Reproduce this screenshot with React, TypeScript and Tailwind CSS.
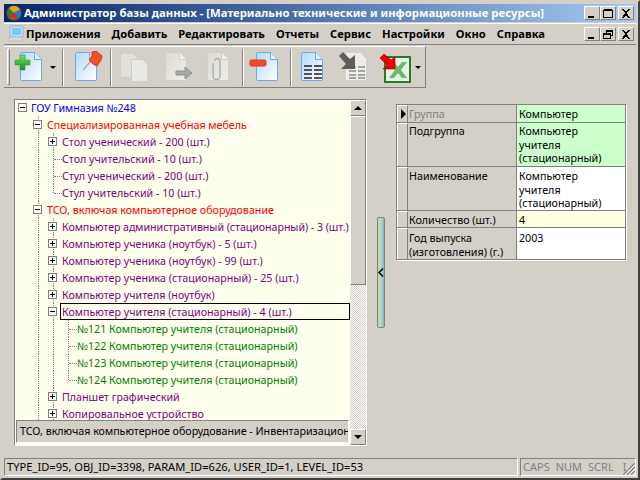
import type { ReactNode } from "react"

const raised = "border-t border-l border-t-white border-l-white border-r border-b border-r-[#808080] border-b-[#808080]"
const sunken = "border border-t-[#808080] border-l-[#808080] border-r-white border-b-white"

type TreeRow = {
  text: string
  color: string
  level: number
  box?: "plus" | "minus"
  guides: number[]
  last?: boolean
  selected?: boolean
  tight?: boolean
}

const PURPLE = "text-[#800080]"
const RED = "text-[#ff0000]"
const GREEN = "text-[#008000]"

const rows: TreeRow[] = [
  { text: "ГОУ Гимназия №248", color: "text-[#0000ff]", level: 0, box: "minus", guides: [] },
  { text: "Специализированная учебная мебель", color: RED, level: 1, box: "minus", guides: [1] },
  { text: "Стол ученический - 200 (шт.)", color: PURPLE, level: 2, box: "plus", guides: [1, 2] },
  { text: "Стол учительский - 10 (шт.)", color: PURPLE, level: 2, guides: [1, 2] },
  { text: "Стул ученический - 200 (шт.)", color: PURPLE, level: 2, guides: [1, 2] },
  { text: "Стул учительский - 10 (шт.)", color: PURPLE, level: 2, guides: [1, 2], last: true },
  { text: "ТСО, включая компьютерное оборудование", color: RED, level: 1, box: "minus", guides: [1] },
  { text: "Компьютер административный (стационарный) - 3 (шт.)", color: PURPLE, level: 2, box: "plus", guides: [1, 2], tight: true },
  { text: "Компьютер ученика (ноутбук) - 5 (шт.)", color: PURPLE, level: 2, box: "plus", guides: [1, 2] },
  { text: "Компьютер ученика (ноутбук) - 99 (шт.)", color: PURPLE, level: 2, box: "plus", guides: [1, 2] },
  { text: "Компьютер ученика (стационарный) - 25 (шт.)", color: PURPLE, level: 2, box: "plus", guides: [1, 2] },
  { text: "Компьютер учителя (ноутбук)", color: PURPLE, level: 2, box: "plus", guides: [1, 2] },
  { text: "Компьютер учителя (стационарный) - 4 (шт.)", color: PURPLE, level: 2, box: "minus", guides: [1, 2], selected: true },
  { text: "№121 Компьютер учителя (стационарный)", color: GREEN, level: 3, guides: [1, 2, 3] },
  { text: "№122 Компьютер учителя (стационарный)", color: GREEN, level: 3, guides: [1, 2, 3] },
  { text: "№123 Компьютер учителя (стационарный)", color: GREEN, level: 3, guides: [1, 2, 3] },
  { text: "№124 Компьютер учителя (стационарный)", color: GREEN, level: 3, guides: [1, 2, 3], last: true },
  { text: "Планшет графический", color: PURPLE, level: 2, box: "plus", guides: [1, 2] },
  { text: "Копировальное устройство", color: PURPLE, level: 2, box: "plus", guides: [1, 2] },
]

function CaptionButton({ children }: { children: ReactNode }) {
  return (
    <div className={`flex h-[14px] w-[16px] items-center justify-center bg-[#d4d0c8] ${raised}`}>
      <svg width="10" height="9" viewBox="0 0 10 9" shapeRendering="crispEdges">
        {children}
      </svg>
    </div>
  )
}

const minGlyph = <rect x="1" y="7" width="6" height="2" fill="#000" />
const maxGlyph = <path d="M0.5 1.5h8.5v7h-8.5zM0.5 0.5h8.5" fill="none" stroke="#000" />
const restoreGlyph = <path d="M3.5 2.5v-2h6v5h-2M3.5 1.5h6M0.5 3.5h6.5v5h-6.5zM0.5 4.5h6.5" fill="none" stroke="#000" />
const closeGlyph = <path d="M1 0h2l2 3 2-3h2l-3 4 3 5h-2l-2-3-2 3h-2l3-5z" fill="#000" />

// sheet of paper with a folded corner, blue when enabled and grey when disabled
function PageShape({ id, x = 0, dim }: { id: string; x?: number; dim?: boolean }) {
  const edge = dim ? "#cfcdc7" : "#6aa8ea"
  return (
    <g transform={`translate(${x} 0)`}>
      <defs>
        <linearGradient id={id} x1="0" y1="0" x2="1" y2="1">
          <stop offset="0" stopColor={dim ? "#dcdad4" : "#b4d8fc"} />
          <stop offset="1" stopColor={dim ? "#f0eeea" : "#ffffff"} />
        </linearGradient>
      </defs>
      <path d="M0.5 2.5q0-1 1-1h13l7 7v20q0 1-1 1h-19q-1 0-1-1z" fill={`url(#${id})`} stroke={edge} />
      <path d="M14.5 1.5v7h7" fill={dim ? "#f2f1ee" : "#e6f2ff"} stroke={edge} />
    </g>
  )
}

function Icon({ w, ml, children }: { w: number; ml: string; children: ReactNode }) {
  return (
    <svg width={w} height="32" viewBox={`0 0 ${w} 32`} className={`shrink-0 ${ml}`}>
      {children}
    </svg>
  )
}

function DropArrow({ ml }: { ml: string }) {
  return <div className={`h-0 w-0 shrink-0 border-x-[3px] border-t-[3px] border-x-transparent border-t-black ${ml}`} />
}

function Divider({ ml }: { ml: string }) {
  return <div className={`h-[37px] w-[2px] shrink-0 border-r border-l border-r-white border-l-[#808080] ${ml}`} />
}

function TreeGuide({ row }: { row: TreeRow }) {
  const x = [0, 38, 53, 68]
  return (
    <>
      {row.guides.map((g) => (
        <span
          key={g}
          className={`absolute top-0 border-l border-dotted border-[#808080] ${g === row.level && row.last ? "h-[9px]" : "h-[17px]"}`}
          style={{ left: x[g] - 15 }}
        />
      ))}
      {!row.box && row.level > 0 && (
        <span
          className="absolute top-[9px] w-[8px] border-t border-dotted border-[#808080]"
          style={{ left: x[row.level] - 14 }}
        />
      )}
    </>
  )
}

function Row({ row }: { row: TreeRow }) {
  const boxLeft = [3, 18, 33, 48][row.level]
  const textLeft = [16, 32, 47, 62][row.level]
  return (
    <div className="relative h-[17px] shrink-0 overflow-hidden">
      <TreeGuide row={row} />
      {row.box && (
        <span
          className="absolute top-[4px] flex h-[9px] w-[9px] items-center justify-center border border-[#808080] bg-white"
          style={{ left: boxLeft }}
        >
          <span className="absolute h-px w-[5px] bg-black" />
          {row.box === "plus" && <span className="absolute h-[5px] w-px bg-black" />}
        </span>
      )}
      <div
        className={`absolute inset-y-0 right-0 flex items-center whitespace-nowrap ${row.color} ${row.tight ? "tracking-[-0.07px]" : ""} ${row.selected ? "border border-black pt-[1px] pl-[1px]" : "pt-[2px] pl-[1px]"}`}
        style={{ left: textLeft - (row.selected ? 2 : 1) }}
      >
        {row.text}
      </div>
    </div>
  )
}

function GridRow({
  label,
  value,
  h,
  bg,
  labelColor = "text-black",
  pad = "pt-[3px] leading-[13.5px]",
  current,
  last,
}: {
  label: ReactNode
  value: ReactNode
  h: string
  bg: string
  labelColor?: string
  pad?: string
  current?: boolean
  last?: boolean
}) {
  return (
    <div className={`flex ${h} ${last ? "" : "border-b border-[#808080]"}`}>
      <div className="flex w-[11px] shrink-0 items-start border-t border-r border-l border-t-white border-r-[#808080] border-l-white bg-[#d4d0c8] pt-[3px] pl-[3px]">
        {current && <div className="h-0 w-0 border-y-[5px] border-l-[5px] border-y-transparent border-l-black" />}
      </div>
      <div className={`w-[109px] shrink-0 border-r border-[#808080] bg-[#d4d0c8] pl-[1px] ${pad} ${labelColor}`}>{label}</div>
      <div className={`flex-1 pl-[2px] ${pad} ${bg}`}>{value}</div>
    </div>
  )
}

export default function App() {
  return (
    <div
      className="flex h-[480px] w-[640px] flex-col overflow-hidden border-2 border-t-[#d4d0c8] border-r-[#404040] border-b-[#404040] border-l-[#d4d0c8] bg-[#d4d0c8] p-[2px] text-[10.7px] text-black"
      style={{ fontFamily: '"Noto Sans", "Liberation Sans", sans-serif' }}
    >
      {/* title bar */}
      <div className="flex h-[18px] shrink-0 items-center bg-gradient-to-r from-[#0a246a] to-[#a6caf0] pr-[2px] pl-[2px]">
        <svg width="16" height="16" viewBox="0 0 16 16" className="shrink-0">
          <circle cx="8" cy="8" r="7.5" fill="#2f7d3a" />
          <path d="M8 1a7 7 0 0 1 6 3.5L8 8 3 3a7 7 0 0 1 5-2z" fill="#e8a020" />
          <path d="M8 8l6-3a7 7 0 0 1-1 8z" fill="#3070d0" />
          <path d="M8 8l-5 2a7 7 0 0 0 6 5l3-2z" fill="#d03020" />
        </svg>
        <span className="ml-[2px] text-[11.33px] font-bold whitespace-nowrap text-white">
          Администратор базы данных - [Материально технические и информационные ресурсы]
        </span>
        <div className="ml-auto flex items-center">
          <CaptionButton>{minGlyph}</CaptionButton>
          <CaptionButton>{maxGlyph}</CaptionButton>
          <div className="ml-[2px]">
            <CaptionButton>{closeGlyph}</CaptionButton>
          </div>
        </div>
      </div>

      {/* menu bar */}
      <div className="mt-px flex h-[22px] shrink-0 items-center border-t border-b border-t-white border-b-[#808080] pr-[2px] pl-[4px]">
        <svg width="16" height="18" viewBox="0 0 16 18" className="shrink-0">
          <rect x="2" y="1" width="13" height="11" rx="1" fill="#c4e2fa" stroke="#8fb0dc" />
          <rect x="4" y="3" width="9" height="7" fill="#7cc8f4" />
          <path d="M1 12h12l2 4H1z" fill="#d8d8e4" stroke="#a0a0b8" strokeWidth="0.5" />
        </svg>
        <div className="ml-[2px] flex gap-[11px] text-[11.2px] font-bold whitespace-nowrap">
          {["Приложения", "Добавить", "Редактировать", "Отчеты", "Сервис", "Настройки", "Окно", "Справка"].map((m) => (
            <span key={m}>{m}</span>
          ))}
        </div>
        <div className="ml-auto flex items-center">
          <CaptionButton>{minGlyph}</CaptionButton>
          <CaptionButton>{restoreGlyph}</CaptionButton>
          <div className="ml-[2px]">
            <CaptionButton>{closeGlyph}</CaptionButton>
          </div>
        </div>
      </div>

      {/* toolbar */}
      <div className="mt-px flex h-[42px] w-[422px] shrink-0 items-center border-t border-r border-b border-t-white border-r-[#808080] border-b-[#808080] pl-[3px]">
        <div className={`h-[36px] w-[3px] shrink-0 bg-[#d4d0c8] ${raised}`} />
        <Icon w={30} ml="ml-[4px]">
          <defs>
            <linearGradient id="plusFill" x1="0" y1="0" x2="0" y2="1">
              <stop offset="0" stopColor="#7ae060" />
              <stop offset="1" stopColor="#1e8a20" />
            </linearGradient>
          </defs>
          <PageShape id="p1" x={6} />
          <path d="M6 4h5v5h5v5h-5v5H6v-5H1V9h5z" fill="url(#plusFill)" stroke="#2f9a2a" strokeWidth="0.6" />
        </Icon>
        <DropArrow ml="ml-[6px]" />
        <Divider ml="ml-[6px]" />
        <Icon w={30} ml="ml-[10px]">
          <PageShape id="p2" x={1} />
          <path d="M9 19l8-9" stroke="#b0a8a0" strokeWidth="1.4" />
          <path d="M18 1l4-1 6 5-1 4-4 6-4-2-4-4 3-4z" fill="#f2502c" stroke="#d03a18" />
        </Icon>
        <Divider ml="ml-[6px]" />
        <Icon w={30} ml="ml-[7px]">
          <path d="M1.5 2.5h13l4 4v20h-17z" fill="#e2e0da" stroke="#cfcdc7" />
          <path d="M12.5 8.5h11l5 5v17h-16z" fill="#ebe9e4" stroke="#cfcdc7" />
        </Icon>
        <Icon w={28} ml="ml-[16px]">
          <PageShape id="p3" dim />
          <path d="M11 20h9v-4l7 6-7 6v-4h-9z" fill="#a8a8a4" stroke="#8f8f8b" />
        </Icon>
        <Icon w={23} ml="ml-[14px]">
          <PageShape id="p4" dim />
          <path d="M8 10a2.5 2.5 0 0 1 5 0v15a3.5 3.5 0 0 1-7 0V12" fill="none" stroke="#a8a8a4" strokeWidth="1.3" />
        </Icon>
        <Divider ml="ml-[12px]" />
        <Icon w={30} ml="ml-[5px]">
          <PageShape id="p5" x={7} />
          <rect x="1" y="9" width="16" height="6" rx="1.5" fill="#f04a28" stroke="#d8381a" />
        </Icon>
        <Divider ml="ml-[11px]" />
        <Icon w={23} ml="ml-[9px]">
          <PageShape id="p6" />
          <path d="M3 15h8M13 15h8M3 19h8M13 19h8M3 23h8M13 23h8M3 27h8M13 27h8" stroke="#202020" strokeWidth="1.4" />
        </Icon>
        <Icon w={28} ml="ml-[15px]">
          <path d="M6.5 1.5h15l6 6v22h-21z" fill="#efede9" stroke="#d4d2cc" />
          <path d="M10 16h7M19 16h7M10 20h7M19 20h7M10 24h7M19 24h7M10 27h7M19 27h7" stroke="#8c8c8c" strokeWidth="1.3" />
          <path d="M0 5l4-4 7 7 5-4v14H2l5-5z" fill="#5e5e5c" />
        </Icon>
        <Icon w={32} ml="ml-[13px]">
          <rect x="5" y="6" width="25" height="25" fill="#e6f2e6" stroke="#2a7a2a" strokeWidth="2" />
          <path d="M9 11h5l4 5 4-5h5l-6 8 6 8h-5l-4-5-4 5H9l6-8z" fill="#6cb86c" />
          <path d="M0 7l4-4 7 6 4-3v12H3l4-4z" fill="#f00000" stroke="#900000" strokeWidth="0.6" />
        </Icon>
        <DropArrow ml="ml-[3px]" />
      </div>

      {/* work area */}
      <div className="flex min-h-0 flex-1 items-start pt-[11px] pl-[10px]">
        <div className={`flex h-[347px] w-[353px] shrink-0 ${sunken}`}>
          <div className="flex min-w-0 flex-1 flex-col bg-[#ffffee]">
            <div className="min-h-0 flex-1 overflow-hidden">
              <div className="-mt-px flex flex-col">
                {rows.map((r) => (
                  <Row key={r.text} row={r} />
                ))}
              </div>
            </div>
            <div className={`mx-px mb-[2px] flex h-[23px] shrink-0 items-center overflow-hidden bg-[#d4d0c8] pl-[3px] tracking-[-0.01px] whitespace-nowrap ${sunken}`}>
              ТСО, включая компьютерное оборудование - Инвентаризацион
            </div>
          </div>
          <div className="flex w-[16px] shrink-0 flex-col">
            <div className={`flex h-[16px] shrink-0 items-center justify-center bg-[#d4d0c8] ${raised}`}>
              <div className="h-0 w-0 border-x-[4px] border-b-[4px] border-x-transparent border-b-black" />
            </div>
            <div className={`h-[169px] shrink-0 bg-[#d4d0c8] ${raised}`} />
            <div className="flex-1 bg-[repeating-conic-gradient(#d4d0c8_0_25%,#ffffff_0_50%)] bg-[length:2px_2px]" />
            <div className={`flex h-[16px] shrink-0 items-center justify-center bg-[#d4d0c8] ${raised}`}>
              <div className="h-0 w-0 border-x-[4px] border-t-[4px] border-x-transparent border-t-black" />
            </div>
          </div>
        </div>

        {/* splitter */}
        <div className="mt-[118px] ml-[10px] flex h-[111px] w-[8px] shrink-0 items-center justify-center rounded-[2px] border border-[#808080] bg-gradient-to-r from-[#b4e0b4] via-[#b4dcb8] to-[#8cacc8]">
          <svg width="6" height="9" viewBox="0 0 6 9" className="shrink-0">
            <path d="M5 0.5L1 4.5l4 4" fill="none" stroke="#000" strokeWidth="1.5" />
          </svg>
        </div>

        {/* details */}
        <div className="mt-[5px] ml-[11px] flex w-[230px] shrink-0 flex-col border border-[#808080] shadow-[1px_1px_0_#ffffff]">
          <GridRow h="h-[18px]" bg="bg-[#ccffcc]" current labelColor="text-[#808080]" label="Группа" value="Компьютер" />
          <GridRow
            h="h-[44px]"
            bg="bg-[#ccffcc]"
            pad="pt-[2px] leading-[13.5px]"
            label="Подгруппа"
            value={<>Компьютер<br />учителя<br />(стационарный)</>}
          />
          <GridRow
            h="h-[44px]"
            bg="bg-white"
            label="Наименование"
            value={<>Компьютер<br />учителя<br />(стационарный)</>}
          />
          <GridRow h="h-[17px]" bg="bg-[#ffffe1]" label="Количество (шт.)" value="4" />
          <GridRow
            h="h-[31px]"
            bg="bg-white"
            last
            pad="pt-[3px] leading-[14px]"
            label={<>Год выпуска<br />(изготовления) (г.)</>}
            value="2003"
          />
        </div>
      </div>

      {/* status bar */}
      <div className="flex h-[18px] shrink-0 gap-[2px]">
        <div className={`flex flex-1 items-center pl-[2px] text-[11.15px] whitespace-nowrap ${sunken}`}>
          TYPE_ID=95, OBJ_ID=3398, PARAM_ID=626, USER_ID=1, LEVEL_ID=53
        </div>
        <div className={`relative flex w-[116px] shrink-0 items-center gap-[6px] pl-[2px] text-[11px] text-[#808080] ${sunken}`}>
          <span>CAPS</span>
          <span>NUM</span>
          <span>SCRL</span>
          <span className="ml-[3px]">I</span>
          <svg width="12" height="12" viewBox="0 0 12 12" className="absolute right-0 bottom-0">
            <path d="M12 0L0 12M12 4L4 12M12 8L8 12" stroke="#808080" strokeWidth="1.2" />
            <path d="M12 2L2 12M12 6L6 12M12 10L10 12" stroke="#ffffff" strokeWidth="1" />
          </svg>
        </div>
      </div>
    </div>
  )
}
